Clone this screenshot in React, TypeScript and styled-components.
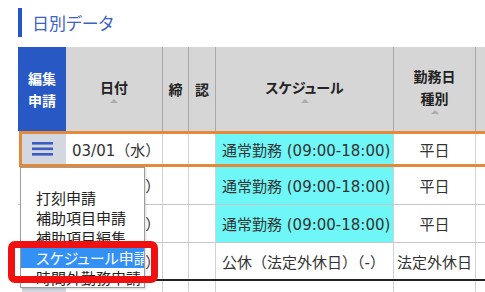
import { createGlobalStyle, styled, css } from "styled-components";

const GlobalStyle = createGlobalStyle`
  html, body {
    margin: 0;
    padding: 0;
    background: #fff;
    overflow: hidden;
  }
  body {
    font-family: "DejaVu Sans", "Noto Sans CJK JP", sans-serif;
    color: #333;
  }
`;

const COLS = [48, 97, 26, 27, 178, 82, 60];
const cols = (first: number) => [first, ...COLS.slice(1)].map(w => `${w}px`).join(" ");

const Page = styled.div`
  position: relative;
  width: 485px;
  height: 292px;
  overflow: hidden;
  padding-left: 18px;
  box-sizing: border-box;
`;

const Title = styled.h2`
  margin: 8px 0 10px;
  height: 29px;
  line-height: 29px;
  padding-left: 10px;
  border-left: 4px solid #2456c6;
  font-family: "Noto Sans CJK JP", sans-serif;
  font-feature-settings: "palt";
  font-size: 17px;
  font-weight: 400;
  color: #3b63c2;
`;

const Table = styled.div`
  width: 540px;
`;

const HeadRow = styled.div`
  display: grid;
  grid-template-columns: ${cols(48)};
  height: 84px;
  background: #d6d6d6;
`;

const HeadCell = styled.div<{ $accent?: boolean }>`
  display: flex;
  flex-direction: column;
  align-items: center;
  justify-content: center;
  box-sizing: border-box;
  border-right: 1px solid #a9a9a9;
  font-family: "Noto Sans CJK JP", sans-serif;
  font-feature-settings: "palt";
  font-size: 14px;
  font-weight: 700;
  line-height: 22px;
  color: #222;
  text-align: center;
  ${p =>
    p.$accent &&
    css`
      background: #2858c4;
      color: #fff;
      border-right: none;
    `}
`;

const SortArrow = styled.span`
  margin-top: 1px;
  width: 0;
  height: 0;
  border-left: 4px solid transparent;
  border-right: 4px solid transparent;
  border-bottom: 4px solid #acacac;
`;

const Row = styled.div<{ $selected?: boolean; $weekEnd?: boolean }>`
  display: grid;
  grid-template-columns: ${cols(48)};
  height: 38px;
  box-sizing: border-box;
  border-bottom: 1px solid #c6c6c6;
  background: #fff;
  ${p =>
    p.$weekEnd &&
    css`
      border-bottom: 2px solid #222;
    `}
  ${p =>
    p.$selected &&
    css`
      grid-template-columns: ${cols(44)};
      height: 36px;
      margin-left: 1px;
      border: 3px solid #e38a3a;
      border-right: none;
      background: #fafafa;
    `}
`;

const Cell = styled.div<{ $align?: "left" | "center"; $cyan?: boolean; $red?: boolean }>`
  display: flex;
  align-items: center;
  justify-content: ${p => (p.$align === "center" ? "center" : "flex-start")};
  padding: 0 ${p => (p.$align === "center" ? "0" : "6px")};
  box-sizing: border-box;
  border-right: 1px solid #d2d2d2;
  font-size: 15px;
  white-space: nowrap;
  overflow: hidden;
  color: ${p => (p.$red ? "#e01818" : "#333")};
  background: ${p => (p.$cyan ? "#6ff6f6" : "#fff")};
`;

const MenuCell = styled.div<{ $selected?: boolean }>`
  display: flex;
  padding-left: ${p => (p.$selected ? "0" : "4px")};
  background: #fff;
`;

const MenuButton = styled.button`
  flex: 1;
  display: flex;
  align-items: center;
  justify-content: center;
  padding: 0 4px 0 0;
  border: none;
  background: #d3d7df;
  cursor: pointer;
`;

const Dropdown = styled.div`
  position: absolute;
  left: 20px;
  top: 167px;
  width: 125px;
  height: 121px;
  box-sizing: border-box;
  border: 1px solid #9c9c9c;
  background: #fff;
  box-shadow: 1px 1px 2px rgba(0, 0, 0, 0.15);
  overflow: hidden;
  z-index: 2;
`;

const MenuItem = styled.div<{ $active?: boolean }>`
  height: 20px;
  line-height: 20px;
  padding-left: 15px;
  font-family: "Noto Sans CJK JP", sans-serif;
  font-feature-settings: "palt";
  font-size: 15px;
  white-space: nowrap;
  color: ${p => (p.$active ? "#fff" : "#222")};
  background: ${p => (p.$active ? "#3391f5" : "transparent")};
`;

const Callout = styled.div`
  position: absolute;
  left: 8px;
  top: 241px;
  width: 150px;
  height: 42px;
  box-sizing: border-box;
  border: 7px solid #f01010;
  border-radius: 7px;
  z-index: 3;
  pointer-events: none;
`;

function Hamburger() {
  return (
    <svg width="21" height="14" viewBox="0 0 21 14">
      <rect x="0" y="0" width="21" height="2.6" fill="#3a5cc0" />
      <rect x="0" y="5.5" width="21" height="2.6" fill="#3a5cc0" />
      <rect x="0" y="11" width="21" height="2.6" fill="#3a5cc0" />
    </svg>
  );
}

type Day = {
  date: string;
  schedule: string;
  kind: string;
  cyan?: boolean;
  selected?: boolean;
  weekEnd?: boolean;
  red?: boolean;
};

const days: Day[] = [
  { date: "03/01（水）", schedule: "通常勤務 (09:00-18:00)", kind: "平日", cyan: true, selected: true },
  { date: "03/02（木）", schedule: "通常勤務 (09:00-18:00)", kind: "平日", cyan: true },
  { date: "03/03（金）", schedule: "通常勤務 (09:00-18:00)", kind: "平日", cyan: true },
  { date: "03/04（土）", schedule: "公休（法定外休日）（-）", kind: "法定外休日", weekEnd: true },
  { date: "03/05（日）", schedule: "公休（法定休日）（-）", kind: "法定休日", red: true },
];

const menuItems = ["", "打刻申請", "補助項目申請", "補助項目編集", "スケジュール申請", "時間外勤務申請", "休暇申請"];

export default function App() {
  return (
    <Page>
      <GlobalStyle />
      <Title>日別データ</Title>
      <Table>
        <HeadRow>
          <HeadCell $accent>
            <span>編集</span>
            <span>申請</span>
          </HeadCell>
          <HeadCell>
            <span>日付</span>
            <SortArrow />
          </HeadCell>
          <HeadCell>締</HeadCell>
          <HeadCell>認</HeadCell>
          <HeadCell>
            <span>スケジュール</span>
            <SortArrow />
          </HeadCell>
          <HeadCell>
            <span>勤務日</span>
            <span>種別</span>
            <SortArrow />
          </HeadCell>
          <HeadCell />
        </HeadRow>
        {days.map(d => (
          <Row key={d.date} $selected={d.selected} $weekEnd={d.weekEnd}>
            <MenuCell $selected={d.selected}>
              <MenuButton aria-label="メニュー">
                <Hamburger />
              </MenuButton>
            </MenuCell>
            <Cell $red={d.red}>{d.date}</Cell>
            <Cell />
            <Cell />
            <Cell $cyan={d.cyan}>{d.schedule}</Cell>
            <Cell $align="center">{d.kind}</Cell>
            <Cell />
          </Row>
        ))}
      </Table>
      <Dropdown>
        {menuItems.map((item, i) => (
          <MenuItem key={i} $active={item === "スケジュール申請"}>
            {item}
          </MenuItem>
        ))}
      </Dropdown>
      <Callout />
    </Page>
  );
}
